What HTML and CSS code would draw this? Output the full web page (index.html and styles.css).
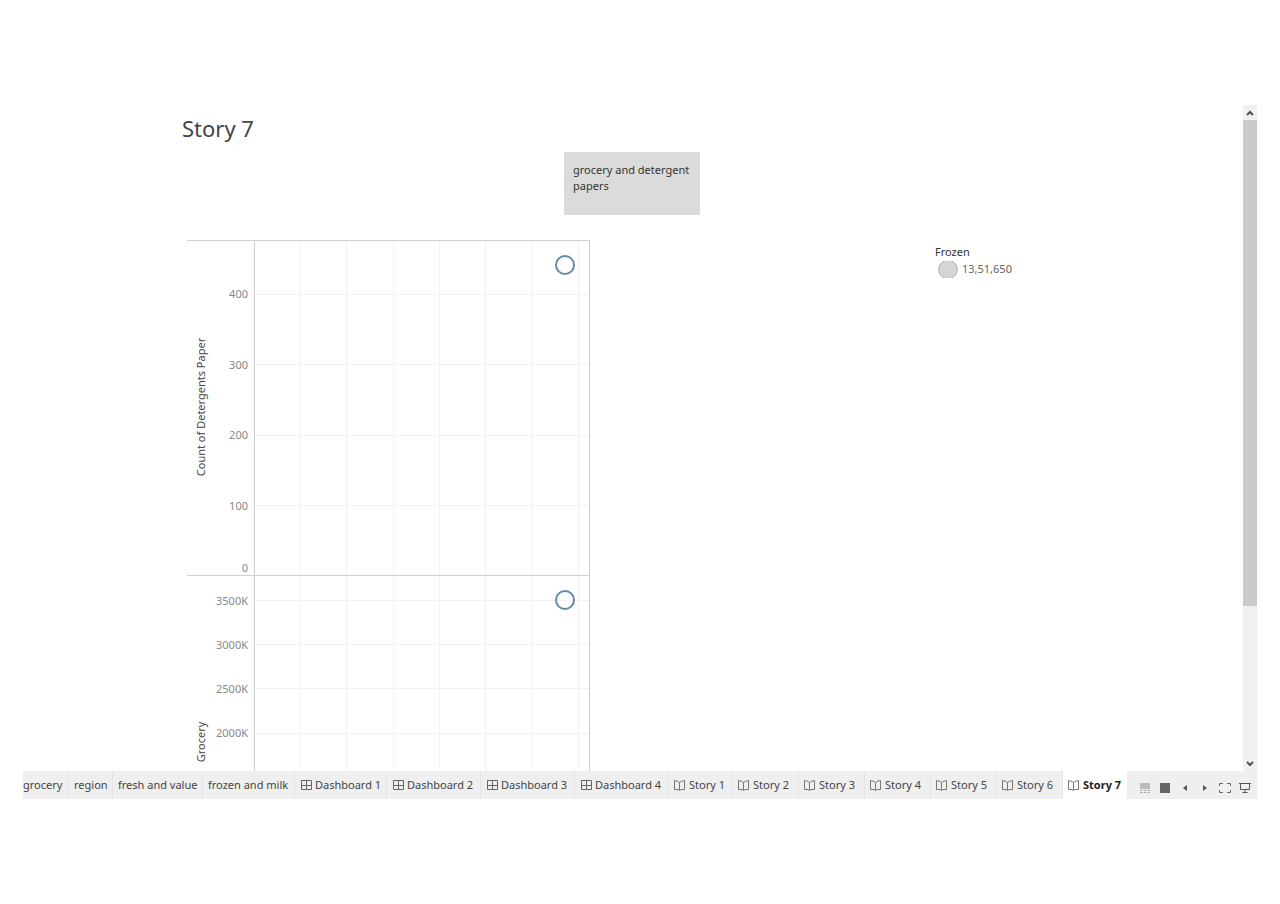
FILE: index.html
```
<!DOCTYPE html>
<html lang="en">
<head>
<meta charset="utf-8">
<title>Story 7</title>
<link rel="stylesheet" href="styles.css">
</head>
<body>
<svg class="symbols" aria-hidden="true">
  <symbol id="grid" viewBox="0 0 11 11"><path d="M.5 .5h10v9H.5zM5.500 .5v9M.5 5.500h10" fill="none" stroke="#666"/></symbol>
  <symbol id="book" viewBox="0 0 11 11"><path d="M5.500 2.500L4 1.500L.5 .5v9L4 9.500L5.500 10.500L7 9.500L10.500 9.500V.5L7 1.500zV10" fill="none" stroke="#777"/></symbol>
</svg>
<div class="app">
  <div class="workspace">
    <main class="story">
      <h1 class="title">Story 7</h1>
      <button class="caption">grocery and detergent papers</button>
      <div class="content">
        <svg class="chart" width="403" height="531" role="img" aria-label="Count of Detergents Paper and Grocery">
          <path class="gridline" d="M113.500 1v530M159.500 1v530M206.500 1v530M252.500 1v530M298.500 1v530M345.500 1v530M391.500 1v530M68 54.500h334M68 124.500h334M68 195.500h334M68 265.500h334M68 360.500h334M68 404.500h334M68 448.500h334M68 493.500h334"/>
          <path class="axis" d="M0 .5h403M0 335.500h403M67.500 0v531M402.500 0v531"/>
          <g class="ticks">
            <text x="61" y="58">400</text>
            <text x="61" y="129">300</text>
            <text x="61" y="199">200</text>
            <text x="61" y="270">100</text>
            <text x="61" y="332">0</text>
            <text x="61" y="365">3500K</text>
            <text x="61" y="409">3000K</text>
            <text x="61" y="453">2500K</text>
            <text x="61" y="497">2000K</text>
          </g>
          <text class="label" transform="translate(18 167) rotate(-90)">Count of Detergents Paper</text>
          <text class="label" transform="translate(18 502) rotate(-90)">Grocery</text>
          <circle class="mark" cx="378" cy="25" r="9"/>
          <circle class="mark" cx="378" cy="360" r="9"/>
        </svg>
        <aside class="legend">
          <div class="legend-title">Frozen</div>
          <div class="legend-row">
            <svg width="20" height="17" viewBox="0 0 20 17"><circle cx="10" cy="8.500" r="9.300" fill="#d6d6d6" stroke="#aaa"/></svg>
            <span>13,51,650</span>
          </div>
        </aside>
      </div>
    </main>
    <div class="scrollbar">
      <button class="arrow" aria-label="Scroll up"><svg width="8" height="6" viewBox="0 0 8 6"><path d="M1 5l3-3 3 3" fill="none" stroke="#505050" stroke-width="2"/></svg></button>
      <div class="track"><div class="thumb"></div></div>
      <button class="arrow" aria-label="Scroll down"><svg width="8" height="6" viewBox="0 0 8 6"><path d="M1 1l3 3 3-3" fill="none" stroke="#505050" stroke-width="2"/></svg></button>
    </div>
  </div>
  <footer class="bar">
    <nav class="tabs">
      <a class="tab first" href="#">grocery</a>
      <a class="tab" href="#">region</a>
      <a class="tab" href="#">fresh and value</a>
      <a class="tab" href="#">frozen and milk</a>
      <a class="tab dash" href="#"><svg class="icon"><use href="#grid"/></svg>Dashboard 1</a>
      <a class="tab dash" href="#"><svg class="icon"><use href="#grid"/></svg>Dashboard 2</a>
      <a class="tab dash" href="#"><svg class="icon"><use href="#grid"/></svg>Dashboard 3</a>
      <a class="tab dash" href="#"><svg class="icon"><use href="#grid"/></svg>Dashboard 4</a>
      <a class="tab" href="#"><svg class="icon"><use href="#book"/></svg>Story 1</a>
      <a class="tab" href="#"><svg class="icon"><use href="#book"/></svg>Story 2</a>
      <a class="tab" href="#"><svg class="icon"><use href="#book"/></svg>Story 3</a>
      <a class="tab" href="#"><svg class="icon"><use href="#book"/></svg>Story 4</a>
      <a class="tab" href="#"><svg class="icon"><use href="#book"/></svg>Story 5</a>
      <a class="tab" href="#"><svg class="icon"><use href="#book"/></svg>Story 6</a>
      <a class="tab active" href="#" aria-current="page"><svg class="icon"><use href="#book"/></svg>Story 7</a>
    </nav>
    <div class="tools">
      <button class="tool" aria-label="Show filmstrip"><svg width="14" height="12" viewBox="0 0 14 12"><path d="M2 1h10v6H2z" fill="#bbb"/><path d="M2 8.500h10M2 10.500h10" stroke="#aaa" stroke-dasharray="2.500 1.200"/></svg></button>
      <button class="tool" aria-label="Show tabs"><svg width="14" height="12" viewBox="0 0 14 12"><path d="M2 1h10v10H2z" fill="#666"/></svg></button>
      <button class="tool" aria-label="Previous"><svg width="14" height="12" viewBox="0 0 14 12"><path d="M9 3v6L5 6z" fill="#555"/></svg></button>
      <button class="tool" aria-label="Next"><svg width="14" height="12" viewBox="0 0 14 12"><path d="M5 3v6l4-3z" fill="#555"/></svg></button>
      <button class="tool" aria-label="Full screen"><svg width="14" height="12" viewBox="0 0 14 12"><path d="M1.500 4V1.500H5M9 1.500h3.500V4M12.500 8v2.500H9M5 10.500H1.500V8" fill="none" stroke="#666"/></svg></button>
      <button class="tool" aria-label="Presentation mode"><svg width="14" height="12" viewBox="0 0 14 12"><path d="M1 1.500h12M2.500 1.500v6h9v-6M7 7.500v3M4.500 10.500h5" fill="none" stroke="#555"/></svg></button>
    </div>
  </footer>
</div>
</body>
</html>
```
FILE: styles.css
```
* { box-sizing: border-box; }
body {
  margin: 0;
  padding: 105px 23px;
  min-height: 100vh;
  display: flex;
  background: #fff;
  color: #333;
  font: 11px/16px "Noto Sans", "Open Sans", sans-serif;
}
button { border: 0; margin: 0; padding: 0; background: none; font: inherit; color: inherit; }
svg { display: block; }
.symbols { position: absolute; width: 0; height: 0; }
.app { flex: 1; min-width: 0; display: flex; flex-direction: column; }
.workspace { flex: 1; display: flex; }
.story { flex: 1; padding: 7px 0 0 159px; display: flex; flex-direction: column; }
.title { margin: 0; font-size: 22px; line-height: 32px; font-weight: 400; color: #444; }
.caption {
  width: 136px;
  height: 63px;
  margin: 8px 0 25px 382px;
  padding: 10px 9px;
  display: flex;
  text-align: left;
  background: #dbdbdb;
}
.content { display: flex; padding-left: 5px; }
.legend { margin-left: 345px; padding-top: 4px; }
.legend-row { display: flex; align-items: center; gap: 4px; padding-left: 3px; line-height: 18px; color: #666; }
.gridline { fill: none; stroke: #f2f2f2; }
.axis { fill: none; stroke: #d0d0d0; }
.ticks { fill: #888; text-anchor: end; }
.label { fill: #444; text-anchor: middle; }
.mark { fill: none; stroke: #648aaa; stroke-width: 2; }
.scrollbar { width: 14px; display: flex; flex-direction: column; background: #f0f0f0; }
.arrow { height: 15px; display: flex; align-items: center; justify-content: center; }
.track { flex: 1; }
.thumb { height: 76.4%; background: #cbcbcb; }
.bar { display: flex; height: 28px; background: #efefef; }
.tabs {
  display: grid;
  grid-template-columns: 46px 44px 90px 92px 92px 94px 94px 94px 64px repeat(5, 66px) 64px;
}
.tab {
  display: flex;
  align-items: center;
  gap: 4px;
  padding-left: 5px;
  border-right: 1px solid #e4e4e4;
  color: #444;
  text-decoration: none;
  white-space: nowrap;
  overflow: hidden;
}
.first { padding-left: 0; }
.dash { gap: 3px; padding-left: 6px; }
.icon { width: 11px; height: 11px; flex: none; }
.active { background: #fff; color: #222; font-weight: 700; border: 0; }
.tools { flex: 1; display: flex; justify-content: flex-end; gap: 6px; padding: 5px 5px 0 0; }
.tool { width: 14px; display: flex; align-items: center; }
```
